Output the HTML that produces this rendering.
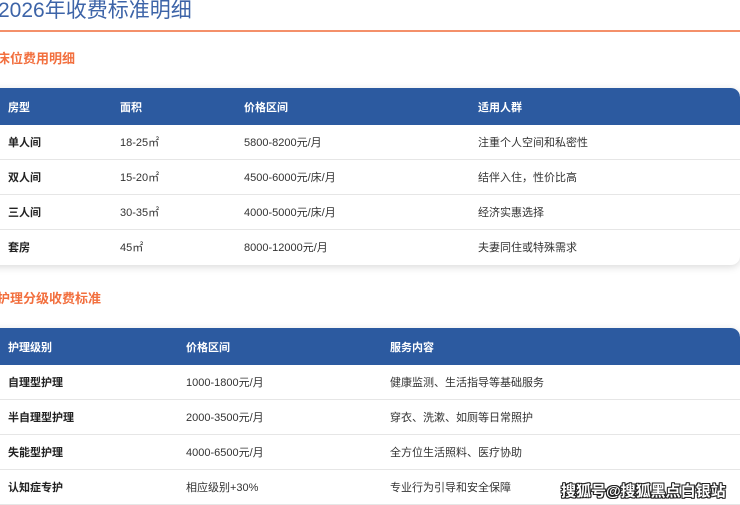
<!DOCTYPE html>
<html><head><meta charset="utf-8"><style>
html,body{margin:0;width:740px;height:505px;overflow:hidden}
body{background:#fff;font-family:"Liberation Sans","Noto Sans CJK SC",sans-serif;position:relative}
.t{position:absolute;left:-2px;top:-6px;font-size:21px;color:#3d64a8;white-space:nowrap}
.line{position:absolute;left:0;top:30px;width:740px;height:2px;background:#f4906a}
.h{position:absolute;left:-3px;font-size:13px;font-weight:bold;color:#f26f3e}
.tb{position:absolute;left:-10px;width:750px;border-radius:0 9px 9px 0;box-shadow:0 2px 8px rgba(0,0,0,.15);overflow:hidden;background:#fff}
.r{height:35px;position:relative;border-bottom:1px solid #e6e6e6;box-sizing:border-box;font-size:11px;color:#333}
.r span{position:absolute;top:9px;white-space:nowrap}
.hd{height:37px;background:#2c5aa0;color:#fff;font-weight:bold;border:none;border-radius:0 9px 0 0}
.hd span{top:11px}
.b{font-weight:bold;color:#222}
.wm{position:absolute;left:561px;top:480px;font-size:15px;font-weight:bold;color:#fff;white-space:nowrap;text-shadow:1px 0 #222,-1px 0 #222,0 1px #222,0 -1px #222,1px 1px #222,-1px -1px #222,1px -1px #222,-1px 1px #222}
</style></head><body>
<div class="t">2026年收费标准明细</div>
<div class="line"></div>
<div class="h" style="top:48px">床位费用明细</div>
<div class="tb" style="top:88px">
<div class="r hd"><span style="left:18px">房型</span><span style="left:130px">面积</span><span style="left:254px">价格区间</span><span style="left:488px">适用人群</span></div>
<div class="r"><span class="b" style="left:18px">单人间</span><span style="left:130px">18-25㎡</span><span style="left:254px">5800-8200元/月</span><span style="left:488px">注重个人空间和私密性</span></div>
<div class="r"><span class="b" style="left:18px">双人间</span><span style="left:130px">15-20㎡</span><span style="left:254px">4500-6000元/床/月</span><span style="left:488px">结伴入住，性价比高</span></div>
<div class="r"><span class="b" style="left:18px">三人间</span><span style="left:130px">30-35㎡</span><span style="left:254px">4000-5000元/床/月</span><span style="left:488px">经济实惠选择</span></div>
<div class="r" style="border:none"><span class="b" style="left:18px">套房</span><span style="left:130px">45㎡</span><span style="left:254px">8000-12000元/月</span><span style="left:488px">夫妻同住或特殊需求</span></div>
</div>
<div class="h" style="top:288px">护理分级收费标准</div>
<div class="tb" style="top:328px;height:190px">
<div class="r hd"><span style="left:18px">护理级别</span><span style="left:196px">价格区间</span><span style="left:400px">服务内容</span></div>
<div class="r"><span class="b" style="left:18px">自理型护理</span><span style="left:196px">1000-1800元/月</span><span style="left:400px">健康监测、生活指导等基础服务</span></div>
<div class="r"><span class="b" style="left:18px">半自理型护理</span><span style="left:196px">2000-3500元/月</span><span style="left:400px">穿衣、洗漱、如厕等日常照护</span></div>
<div class="r"><span class="b" style="left:18px">失能型护理</span><span style="left:196px">4000-6500元/月</span><span style="left:400px">全方位生活照料、医疗协助</span></div>
<div class="r"><span class="b" style="left:18px">认知症专护</span><span style="left:196px">相应级别+30%</span><span style="left:400px">专业行为引导和安全保障</span></div>
</div>
<div class="wm">搜狐号@搜狐黑点白银站</div>
</body></html>
